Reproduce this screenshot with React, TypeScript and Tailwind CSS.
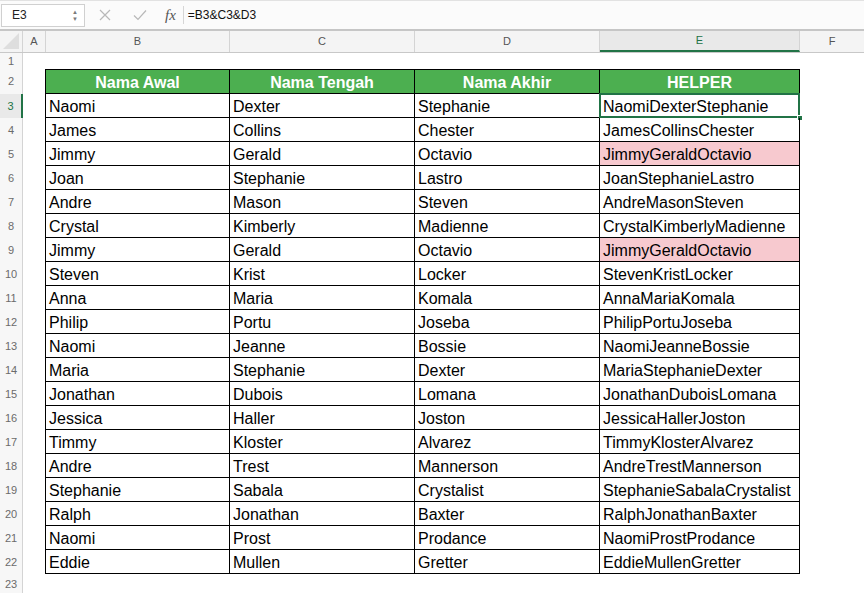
import React from "react";

const rows: [string, string, string, boolean][] = [
  ["Naomi", "Dexter", "Stephanie", false],
  ["James", "Collins", "Chester", false],
  ["Jimmy", "Gerald", "Octavio", true],
  ["Joan", "Stephanie", "Lastro", false],
  ["Andre", "Mason", "Steven", false],
  ["Crystal", "Kimberly", "Madienne", false],
  ["Jimmy", "Gerald", "Octavio", true],
  ["Steven", "Krist", "Locker", false],
  ["Anna", "Maria", "Komala", false],
  ["Philip", "Portu", "Joseba", false],
  ["Naomi", "Jeanne", "Bossie", false],
  ["Maria", "Stephanie", "Dexter", false],
  ["Jonathan", "Dubois", "Lomana", false],
  ["Jessica", "Haller", "Joston", false],
  ["Timmy", "Kloster", "Alvarez", false],
  ["Andre", "Trest", "Mannerson", false],
  ["Stephanie", "Sabala", "Crystalist", false],
  ["Ralph", "Jonathan", "Baxter", false],
  ["Naomi", "Prost", "Prodance", false],
  ["Eddie", "Mullen", "Gretter", false],
];

const cell = "h-full border-r border-b border-black px-[3px] pt-[2px] flex items-center";

function RowHead({ n, active }: { n: number; active?: boolean }) {
  return (
    <div
      className={`w-[23px] shrink-0 h-full flex items-center justify-center text-[11px] ${
        active ? "text-[#217346] border-r-2 border-[#217346] bg-[#e9e9e9]" : "text-[#6b6b6b] border-r border-[#d4d4d4] bg-[#f7f7f7]"
      }`}
    >
      {n}
    </div>
  );
}

export default function App() {
  return (
    <div className="w-[864px] h-[593px] overflow-hidden bg-white font-['Liberation_Sans',Arial,sans-serif] select-none">
      {/* formula bar */}
      <div className="h-[29px] flex items-center bg-[#fbfbfb] border-t border-[#e2e2e2]">
        <div className="w-[84px] h-[23px] ml-[1px] flex items-center justify-between bg-white border border-[#d0d0d0]">
          <span className="pl-[10px] text-[12px] text-[#222]">E3</span>
          <div className="flex flex-col items-center pr-[6px] text-[#7a7a7a] leading-none">
            <span className="text-[6px]">▲</span>
            <span className="text-[6px] mt-[1px]">▼</span>
          </div>
        </div>
        <div className="w-[12px]" />
        <svg width="12" height="12" viewBox="0 0 12 12" className="ml-[2px]">
          <path d="M1 1 L11 11 M11 1 L1 11" stroke="#b8b8b8" strokeWidth="1.2" fill="none" />
        </svg>
        <svg width="14" height="12" viewBox="0 0 14 12" className="ml-[22px]">
          <path d="M1 6.5 L5 10.5 L13 1.5" stroke="#b8b8b8" strokeWidth="1.2" fill="none" />
        </svg>
        <span className="ml-[18px] text-[15px] italic text-[#555] font-['Liberation_Serif',serif]">fx</span>
        <div className="ml-[7px] w-px h-[18px] bg-[#d6d6d6]" />
        <span className="ml-[4px] text-[12px] text-[#111]">=B3&amp;C3&amp;D3</span>
      </div>
      <div className="h-[2px] border-t border-[#c6c6c6] border-b border-[#c6c6c6]" />

      {/* column headers */}
      <div className="h-[22px] flex bg-[#f4f4f4] border-b border-[#c8c8c8] text-[11px] text-[#555]">
        <div className="w-[23px] shrink-0 border-r border-[#d4d4d4] relative overflow-hidden">
          <svg width="16" height="16" className="absolute right-[3px] bottom-[3px]">
            <polygon points="16,0 16,16 0,16" fill="#dedede" />
          </svg>
        </div>
        <div className="w-[23px] shrink-0 border-r border-[#d4d4d4] flex items-center justify-center">A</div>
        <div className="w-[184px] shrink-0 border-r border-[#d4d4d4] flex items-center justify-center">B</div>
        <div className="w-[185px] shrink-0 border-r border-[#d4d4d4] flex items-center justify-center">C</div>
        <div className="w-[185px] shrink-0 border-r border-[#d4d4d4] flex items-center justify-center">D</div>
        <div className="w-[200px] shrink-0 border-r border-[#d4d4d4] flex items-center justify-center bg-[#e9e9e9] text-[#217346] border-b-2 border-b-[#217346]">E</div>
        <div className="flex-1 flex items-center justify-center">F</div>
      </div>

      {/* row 1 */}
      <div className="h-[16px] flex">
        <RowHead n={1} />
      </div>

      {/* row 2 header */}
      <div className="h-[25px] flex">
        <RowHead n={2} />
        <div className="w-[22px] shrink-0" />
        <div className="flex border-t border-black text-white font-bold text-[16px]">
          <div className={`${cell} border-l w-[185px] justify-center bg-[#4caf50]`}>Nama Awal</div>
          <div className={`${cell} w-[185px] justify-center bg-[#4caf50]`}>Nama Tengah</div>
          <div className={`${cell} w-[185px] justify-center bg-[#4caf50]`}>Nama Akhir</div>
          <div className={`${cell} w-[200px] justify-center bg-[#4caf50]`}>HELPER</div>
        </div>
      </div>

      {rows.map(([a, b, c, dup], i) => (
        <div key={i} className="h-[24px] flex text-[16px] text-black">
          <RowHead n={i + 3} active={i === 0} />
          <div className="w-[22px] shrink-0" />
          <div className={`${cell} border-l w-[185px]`}>{a}</div>
          <div className={`${cell} w-[185px]`}>{b}</div>
          <div className={`${cell} w-[185px]`}>{c}</div>
          <div className={`${cell} w-[200px] relative ${dup ? "bg-[#f7c9cf]" : ""}`}>
            {a + b + c}
            {i === 0 && (
              <>
                <div className="absolute -left-px -top-px -right-px -bottom-px border-2 border-[#217346] pointer-events-none" />
                <div className="absolute -right-[4px] -bottom-[4px] w-[6px] h-[6px] bg-[#217346] border border-white" />
              </>
            )}
          </div>
        </div>
      ))}

      <div className="h-[20px] flex">
        <RowHead n={23} />
      </div>
    </div>
  );
}
